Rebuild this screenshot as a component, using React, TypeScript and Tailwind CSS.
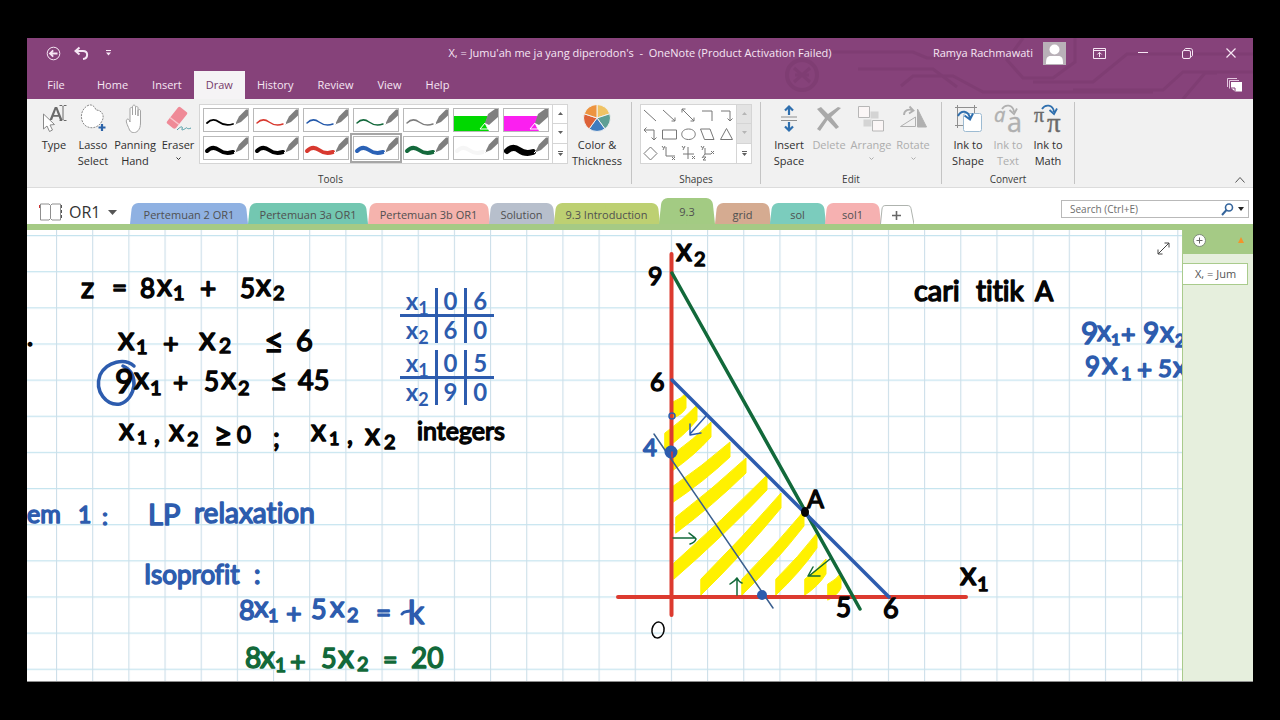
import type { ReactNode } from "react";
import clsx from "clsx";

const INK = "#050505";
const BLUE = "#2d5cae";
const GREEN = "#12693a";
const RED = "#dc3a2f";

/* ---------- title bar ---------- */

const Circuit = () => (
  <svg className="pointer-events-none absolute top-0 right-0" width="470" height="61" fill="none" stroke="#763769" strokeWidth="3" opacity="0.4">
    <circle cx="19" cy="37" r="15" strokeWidth="4" />
    <path d="M11 30l16 14M27 30l-16 14M12 37h14" />
    <path d="M20 14h110l14 6h60M75 31h75l24 18M118 48l12-10h40l30 16h170" />
    <path d="M240 0l-16 22 16 18h30l22-16V0M250 44h60l34-28h126M290 52h90l20-18h70M400 61l22-26h12" />
  </svg>
);

const TitleBar = () => (
  <div className="relative z-10 grid h-[30px] grid-cols-[1fr_auto_1fr] items-center text-[11px] text-[#f6e6f4]">
    <div className="flex items-center pl-[19px]">
      <button aria-label="Back" className="flex w-[28px] items-center">
        <svg width="15" height="15" viewBox="0 0 15 15" fill="none" stroke="currentColor">
          <circle cx="7.5" cy="7.5" r="6.3" />
          <path d="M11.5 7.5H4.5M7.2 4.3L4 7.5l3.2 3.2" strokeWidth="1.8" />
        </svg>
      </button>
      <button aria-label="Undo" className="flex w-[32px] items-center">
        <svg width="15" height="15" viewBox="0 0 15 15" fill="none" stroke="currentColor" strokeWidth="2">
          <path d="M5.5 1.5L1.5 5l4 3.6M2 5h7c5.5 0 5.5 7.5 0 8" />
        </svg>
      </button>
      <button aria-label="Customize toolbar" className="flex items-center">
        <svg width="5" height="6" viewBox="0 0 5 6" fill="currentColor">
          <path d="M0 0h5v1H0zM0 2.500h5L2.500 5.500z" />
        </svg>
      </button>
    </div>
    <h1 className="whitespace-pre">{"X, = Jumu'ah me ja yang diperodon's  -  OneNote (Product Activation Failed)"}</h1>
    <div className="flex items-center justify-end">
      <span>Ramya Rachmawati</span>
      <svg className="mr-[11px] ml-[10px]" width="23" height="23" viewBox="0 0 23 23">
        <path d="M0 0h23v23H0z" fill="#b9b1b8" />
        <circle cx="11.500" cy="7.500" r="5" fill="#fff" />
        <path d="M3 22c0-6 1-8 5-8h7c4 0 5 2 5 8z" fill="#fff" />
      </svg>
      <button aria-label="Ribbon display options" className="flex w-11 justify-center">
        <svg width="13" height="11" viewBox="0 0 13 11" fill="none" stroke="currentColor">
          <path d="M.5.5h12v10H.5zM.5 2.500h12M6.500 9V4.500M4.300 6.500l2.200-2.200 2.200 2.200" />
        </svg>
      </button>
      <button aria-label="Minimize" className="flex w-11 justify-center">
        <svg width="10" height="2"><path d="M0 .5h10" stroke="currentColor" /></svg>
      </button>
      <button aria-label="Restore" className="flex w-11 justify-center">
        <svg width="11" height="11" viewBox="0 0 11 11" fill="none" stroke="currentColor">
          <rect x=".5" y="2.500" width="8" height="8" rx="1.500" />
          <path d="M2.500 2.500V2C2.500 1 3 .5 4 .5h4.500c1 0 2 1 2 2V7c0 1-.5 1.500-1.500 1.500" />
        </svg>
      </button>
      <button aria-label="Close" className="flex w-11 justify-center">
        <svg width="10" height="10"><path d="M.5.5l9 9M9.500.5l-9 9" stroke="currentColor" strokeWidth="1.200" /></svg>
      </button>
    </div>
  </div>
);

const menus = ["Home", "Insert", "Draw", "History", "Review", "View", "Help"];

const MenuTabs = () => (
  <nav className="relative z-10 mt-[3px] flex h-7 items-stretch text-[11px] text-[#f6e6f4]">
    <button className="w-[58px]">File</button>
    {menus.map((m) => (
      <button key={m} className={clsx("px-3", m === "Draw" && "bg-[#f5f3f5] text-[#77396b]")}>
        {m}
      </button>
    ))}
    <button aria-label="Pages" className="mr-[11px] ml-auto">
      <svg width="15" height="14" viewBox="0 0 15 14">
        <path d="M.5 9V.5H10M2.500 10.500v-8H12" fill="none" stroke="#e3c6df" />
        <path d="M4 4h11v9.500H8L4 10z" fill="#fff" />
        <path d="M4 10h4v3.500" fill="none" stroke="#86417a" />
      </svg>
    </button>
  </nav>
);

/* ---------- ribbon ---------- */

const Chevron = () => (
  <svg width="5" height="4" viewBox="0 0 5 4" fill="none" stroke="currentColor"><path d="M.5.5l2 2 2-2" /></svg>
);

type RibbonButtonProps = { label: string; icon: ReactNode; width: string; drop?: boolean; disabled?: boolean };

const RibbonButton = ({ label, icon, width, drop, disabled }: RibbonButtonProps) => (
  <button disabled={disabled} className={clsx("flex flex-col items-center text-center leading-4", width, disabled ? "text-[#adadad]" : "text-[#2f2f2f]")}>
    <span className="mb-1 flex h-[29px] items-center">{icon}</span>
    <span>{label}</span>
    {drop && <span className="mt-1"><Chevron /></span>}
  </button>
);

const Group = ({ title, className, children }: { title: string; className?: string; children: ReactNode }) => (
  <section className={clsx("my-[3px] flex flex-col border-r border-[#c4c4c4] pt-[2px]", className)}>
    <div className="flex flex-1 items-start">{children}</div>
    <h2 className="text-center text-[10px] leading-[10px] text-[#3b3b3b]">{title}</h2>
  </section>
);

const TypeIcon = () => (
  <svg width="28" height="29" viewBox="0 0 28 29">
    <path d="M9.500 16L14.800 3h2.400l5.300 13h-2.600l-1.200-3.200h-5.400L12.100 16zM14 11h4L16 5.500z" fill="#6a6a6a" />
    <path d="M19.500 1.500h2.500l1 1 1-1h2.500M23 2.500v13M19.500 16.500h2.500l1-1 1 1h2.500" fill="none" stroke="#6a6a6a" />
    <path d="M3.500 10v15l3.500-3 2.500 5.500 3-1.500-2.500-5 4.500-.5z" fill="#fff" stroke="#8a8a8a" />
  </svg>
);

const LassoIcon = () => (
  <svg width="28" height="29" viewBox="0 0 28 29">
    <path d="M8 2C13-1 16 3 17 6c6 0 9 6 6 11-3 6-9 8-14 6C2 21-1 8 8 2z" fill="#fff" stroke="#8b8b8b" strokeDasharray="2 1" />
    <path d="M23 20v7M19.500 23.500h7" stroke="#2c63a8" strokeWidth="2.200" />
  </svg>
);

const HandIcon = () => (
  <svg width="20" height="29" viewBox="0 0 20 29" fill="#fff" stroke="#a3a3a3">
    <path d="M5 13V5c0-2 2.500-2 2.500 0v6V3c0-2.500 3-2.500 3 0v8-7c0-2 2.500-2 2.500 0v8-5c0-2 2.500-2 2.500 0v12c0 10-8 12-11 7-1-3-4-8-3-10s3-.5 3.500 2z" />
  </svg>
);

const EraserIcon = () => (
  <svg width="28" height="29" viewBox="0 0 28 29">
    <path d="M14 3.500c1-1 1.500-1 2.500-.3l6 4.800c1 .8 1 1.500.3 2.500L12 24c-1 1-2 1-3 .3l-5.500-4.500c-1-.8-1-1.600-.3-2.500z" fill="#ef8a97" />
    <path d="M6 13.500l9 7" stroke="#f9c6cc" strokeWidth="1.500" />
    <path d="M13 26c5-5 6-3 5-1s3 0 4-1 1 2 5 0" fill="none" stroke="#4d9ca6" />
  </svg>
);

const WheelIcon = () => (
  <svg width="28" height="29" viewBox="-14 -14 28 29" stroke="#f1f1f1" strokeWidth="1">
    <path d="M0 0L0-13.500A13.500 13.500 0 0 1 12.800-4.200z" fill="#efc365" />
    <path d="M0 0L12.800-4.200A13.500 13.500 0 0 1 7.900 10.900z" fill="#5e9f95" />
    <path d="M0 0L7.900 10.900A13.500 13.500 0 0 1-7.900 10.900z" fill="#3f7cbf" />
    <path d="M0 0L-7.900 10.900A13.500 13.500 0 0 1-12.800-4.200z" fill="#dd6238" />
    <path d="M0 0L-12.800-4.200A13.500 13.500 0 0 1 0-13.500z" fill="#ed9440" />
  </svg>
);

const pens = [
  { name: "Black pen, thin", color: "#000", w: 1.8 },
  { name: "Red pen, thin", color: "#d8392f", w: 1.5 },
  { name: "Blue pen, thin", color: "#2459ab", w: 1.5 },
  { name: "Green pen, thin", color: "#14693c", w: 1.5 },
  { name: "Gray pen, thin", color: "#7d7d7d", w: 1.5 },
  { name: "Green highlighter", color: "#00d800", w: 0 },
  { name: "Magenta highlighter", color: "#fb1ff0", w: 0 },
  { name: "Black pen, medium", color: "#000", w: 4 },
  { name: "Black pen, wide", color: "#000", w: 4 },
  { name: "Red pen, wide", color: "#d8392f", w: 4 },
  { name: "Blue pen, wide", color: "#2b62b6", w: 4, selected: true },
  { name: "Green pen, wide", color: "#14693c", w: 4 },
  { name: "White pen", color: "#f6f6f6", w: 4 },
  { name: "Black pen, thick", color: "#000", w: 6 },
];

const PenCell = ({ name, color, w, selected }: { name: string; color: string; w: number; selected?: boolean }) => (
  <button
    aria-label={name}
    className={clsx("h-6 w-[46px] border border-[#b9b9b9] bg-white", selected && "outline-2 outline-offset-1 outline-[#a6a6a6]")}
  >
    <svg width="44" height="22" viewBox="0 0 44 22">
      {w === 0 ? (
        <>
          <path d="M0 7h34l-3 8 4 7H0z" fill={color} />
          <path d="M31 14l-5 6h8z" fill={color} stroke="#fff" strokeWidth="1" />
        </>
      ) : (
        <path d="M3 14c4-4 8-4 12-1s8 4 14 2" fill="none" stroke={color} strokeWidth={w} strokeLinecap="round" />
      )}
      <path d={w === 0 ? "M31 14l3-9 7-5h3v8l-9 8z" : "M31 15.500l4-8 7-7h2v6l-7 6.500z"} fill="#7f7f7f" />
      {w > 0 && <path d="M30 16l2-2" stroke="#fff" strokeWidth="1" />}
    </svg>
  </button>
);

const ScrollColumn = ({ dim }: { dim?: boolean }) => (
  <div className="grid w-[15px] grid-rows-3 border-l border-[#d5d5d5]">
    {["M0 3l2.500-3 2.500 3z", "M0 0l2.500 3 2.500-3z", "M0 0h5v1H0zM0 2l2.500 3 2.500-3z"].map((d, i) => (
      <button
        key={d}
        aria-label={["Scroll up", "Scroll down", "More"][i]}
        className={clsx("flex items-center justify-center border-b border-[#d5d5d5] last:border-b-0", dim && i < 2 ? "bg-[#e3e3e3] text-[#b5b5b5]" : "text-[#606060]")}
      >
        <svg width="5" height="5" fill="currentColor"><path d={d} /></svg>
      </button>
    ))}
  </div>
);

const shapes: [string, string][] = [
  ["Line", "M2 3l12 11"],
  ["Arrow", "M2 3l12 11M14 10.500v3.500h-3.500"],
  ["Double arrow", "M2 2l12 12M2 5.500V2h3.500M14 10.500v3.500h-3.500"],
  ["Elbow", "M3 4h10v10"],
  ["Elbow arrow", "M3 4h9v10M9.500 11.500l2.500 2.500 2.500-2.500"],
  ["Elbow double arrow", "M2 4h10v10M9.500 11.500l2.500 2.500 2.500-2.500M4.500 1.500L2 4l2.500 2.500"],
  ["Rectangle", "M1.500 4h14v9h-14z"],
  ["Ellipse", "M8.500 3c9 0 9 10.500 0 10.500S-.5 3 8.500 3z"],
  ["Parallelogram", "M1.500 3h9.500l4 10.500H5.500z"],
  ["Triangle", "M8.500 2.500l6 11h-12z"],
  ["Diamond", "M8.500 2l6.500 6.500-6.500 6.500L2 8.500z"],
  ["2D axes, corner", "M5 2v9h9M1 1l1.500 2M4 1L2 5M11 12l3 3M14 12l-3 3"],
  ["2D axes", "M8 2v12M3 9h11M2 1l1.500 2M5 1L3 5M12 11l3 3M15 11l-3 3"],
  ["3D axes", "M6 3v6h6M6 9l-3 4M2 1l1.500 2M5 1L3 5M12 6l3 3M15 6l-3 3M4 12h3l-3 3h3"],
];

const InsertSpaceIcon = () => (
  <svg width="18" height="29" viewBox="0 0 18 29">
    <path d="M1 13h16M1 16.500h16" stroke="#8f8f8f" />
    <path d="M9 11V3M9 18v8M5 6.500l4-4 4 4M5 22.500l4 4 4-4" fill="none" stroke="#2f6fae" strokeWidth="2.200" />
  </svg>
);

const DeleteIcon = () => (
  <svg width="26" height="29" viewBox="0 0 26 29" fill="#a9a9a9">
    <path d="M1 5l4-2 7 7 10-7 3 1-10 9 8 10-3 2-8.500-9L4 27l-3-2 8-11z" />
  </svg>
);

const ArrangeIcon = () => (
  <svg width="28" height="29" viewBox="0 0 28 29" stroke="#b7b7b7">
    <path d="M13.500 7.500h8v7h-8zM6.500 15.500h8v7h-8z" fill="#d4d4d4" stroke="none" />
    <path d="M1.500 2.500h11v11h-11zM15.500 16.500h11v10.500h-11z" fill="#fbf6f6" />
  </svg>
);

const RotateIcon = () => (
  <svg width="28" height="29" viewBox="0 0 28 29" fill="none" stroke="#b0b0b0">
    <path d="M16.500 13v9.500H1.500z" />
    <path d="M18.500 5l9 18h-9z" fill="#b0b0b0" />
    <path d="M5 11c0-5 5-6.500 9-4.500M10.500 2.500L14.500 6.500l-4.500 3" strokeWidth="1.800" />
  </svg>
);

const InkToShapeIcon = () => (
  <svg width="28" height="29" viewBox="0 0 28 29" fill="none">
    <path d="M3.500 1v23M1 3.500h22M20.500 1v8M1 21.500h8" stroke="#8f8f8f" />
    <rect x="9.500" y="9.500" width="18" height="18" rx="2" fill="#fff" stroke="#9dbbd2" />
    <path d="M4 12c3-6 10-6 12 2M10.500 11.500l5.500 4 3-6" stroke="#2f6fae" strokeWidth="2" />
  </svg>
);

const ConvertIcon = ({ glyph, font, color, arrow, italic }: { glyph: string; font: string; color: string; arrow: string; italic?: boolean }) => (
  <svg className="overflow-visible" width="28" height="29" viewBox="0 0 28 29" fill="none" aria-hidden="true">
    <g fill={color} stroke={color} strokeWidth="0.400" fontFamily={font}>
      <text x="0" y="18" fontSize="20" fontStyle={italic ? "italic" : "normal"}>{glyph}</text>
      <text x="13" y="28" fontSize="27">{glyph}</text>
    </g>
    <path d="M8 5c3-5 11-5 12 3M15.500 6l4.500 4 3-5.500" stroke={arrow} strokeWidth="1.800" />
  </svg>
);

const Ribbon = () => (
  <div className="flex h-[89px] border-b border-[#dcdcdc] bg-[#f1f1f1] text-[11px]">
    <Group title="Tools" className="pr-[5px] pl-2">
      <RibbonButton label="Type" icon={<TypeIcon />} width="w-[38px]" />
      <RibbonButton label="Lasso Select" icon={<LassoIcon />} width="w-10" />
      <RibbonButton label="Panning Hand" icon={<HandIcon />} width="w-[44px]" />
      <RibbonButton label="Eraser" icon={<EraserIcon />} width="w-[42px]" drop />
      <div className="flex h-[60px] border border-[#d5d5d5] bg-white">
        <div className="grid grid-cols-7 content-center gap-x-[4px] gap-y-1 px-[3px]">
          {pens.map((p) => (
            <PenCell key={p.name} {...p} />
          ))}
        </div>
        <ScrollColumn />
      </div>
      <RibbonButton label="Color & Thickness" icon={<WheelIcon />} width="w-[58px]" />
    </Group>
    <Group title="Shapes" className="px-2">
      <div className="flex h-[60px] border border-[#d5d5d5] bg-white">
        <div className="grid grid-cols-5 content-center gap-[2px] px-[1px]">
          {shapes.map(([name, d]) => (
            <button key={name} aria-label={name}>
              <svg width="17" height="17" fill="none" stroke="#777"><path d={d} /></svg>
            </button>
          ))}
        </div>
        <ScrollColumn dim />
      </div>
    </Group>
    <Group title="Edit" className="px-2">
      <RibbonButton label="Insert Space" icon={<InsertSpaceIcon />} width="w-10" />
      <RibbonButton label="Delete" icon={<DeleteIcon />} width="w-10" disabled />
      <RibbonButton label="Arrange" icon={<ArrangeIcon />} width="w-[44px]" drop disabled />
      <RibbonButton label="Rotate" icon={<RotateIcon />} width="w-10" drop disabled />
    </Group>
    <Group title="Convert" className="px-[6px]">
      <RibbonButton label="Ink to Shape" icon={<InkToShapeIcon />} width="w-10" />
      <RibbonButton label="Ink to Text" icon={<ConvertIcon glyph="a" font="Open Sans, sans-serif" color="#b0b0b0" arrow="#b0b0b0" italic />} width="w-10" disabled />
      <RibbonButton label="Ink to Math" icon={<ConvertIcon glyph="π" font="Liberation Serif, serif" color="#6a6a6a" arrow="#2f6fae" />} width="w-10" />
    </Group>
    <button aria-label="Collapse ribbon" className="mr-2 mb-1 ml-auto self-end">
      <svg width="10" height="6" fill="none" stroke="#555"><path d="M.5 5.500l4.500-5 4.500 5" /></svg>
    </button>
  </div>
);

/* ---------- section tabs ---------- */

const sections = [
  { name: "Pertemuan 2 OR1", color: "bg-[#8fb1e2]", width: "w-[118px]" },
  { name: "Pertemuan 3a OR1", color: "bg-[#73c7b1]", width: "w-[120px]" },
  { name: "Pertemuan 3b OR1", color: "bg-[#f5b3ad]", width: "w-[121px]" },
  { name: "Solution", color: "bg-[#b7bfcc]", width: "w-[65px]" },
  { name: "9.3 Introduction", color: "bg-[#bdd072]", width: "w-[105px]" },
  { name: "9.3", color: "bg-[#a3cb83]", width: "w-[56px]", active: true },
  { name: "grid", color: "bg-[#d5ab91]", width: "w-[55px]" },
  { name: "sol", color: "bg-[#7bccbd]", width: "w-[55px]" },
  { name: "sol1", color: "bg-[#f6b1b1]", width: "w-[55px]" },
];

const SectionTabs = () => (
  <div className="flex h-9 items-end bg-white">
    <button className="flex w-[103px] items-center self-center pt-3 pl-3 text-base text-[#333]">
      <svg width="24" height="20" viewBox="0 0 24 20" fill="none" stroke="#8f8f8f">
        <path d="M11.500 3.500L10 2H1.500v16H10l1.500-1.500L13 18h8.500V2H13zM11.500 3.500v13" />
        <path d="M22.500 3v3M22.500 8v3M22.500 13v3" stroke="#555" />
        <path d="M.5 3v3" stroke="#c33" />
      </svg>
      <span className="ml-[6px]">OR1</span>
      <svg className="ml-2" width="9" height="5"><path d="M0 0h9L4.500 5z" fill="#555" /></svg>
    </button>
    {sections.map((s) => (
      <button key={s.name} className={clsx("relative pt-[3px] text-[11px] text-[#505050]", s.width, s.active ? "h-[26px]" : "h-[21px]")}>
        <span className={clsx("absolute inset-y-0 left-0 w-1/2 origin-bottom-left -skew-x-6 rounded-tl-md", s.color)} />
        <span className={clsx("absolute inset-y-0 right-0 w-1/2 origin-bottom-right skew-x-6 rounded-tr-md", s.color)} />
        <span className="relative">{s.name}</span>
      </button>
    ))}
    <button aria-label="New section" className="relative flex h-[19px] w-[34px] items-center justify-center">
      <svg width="34" height="19" fill="none">
        <path d="M.5 19L2 4C2.500 1.500 3 .5 6 .5h21c3 0 3.500 1 4 3L34 19" stroke="#aeb3ae" />
        <path d="M16.500 6v9M12 10.500h9" stroke="#666" strokeWidth="1.600" />
      </svg>
    </button>
    <div className="mr-1 mb-[6px] ml-auto flex h-[18px] w-[188px] items-center border border-[#b9b9b9] bg-white pr-1 pl-2">
      <input type="text" aria-label="Search" placeholder="Search (Ctrl+E)" className="min-w-0 flex-1 text-[10px] text-[#333] outline-none placeholder:text-[#6d6d6d]" />
      <button aria-label="Search notebook" className="flex items-center gap-1">
        <svg width="13" height="13" fill="none" stroke="#35659c" strokeWidth="1.600">
          <circle cx="8" cy="4.500" r="3.500" />
          <path d="M5.500 7L1 12" strokeWidth="2" />
        </svg>
        <svg width="6" height="4"><path d="M0 0h6L3 4z" fill="#222" /></svg>
      </button>
    </div>
  </div>
);

/* ---------- page ink ---------- */

// a part is [text, x, baseline, size]
type Part = [string, number, number, number];
type Note = { color: string; parts: Part[] };

const notes: Note[] = [
  { color: INK, parts: [["z", 81, 298, 29], ["=", 112, 297, 26], ["8", 140, 298, 26], ["x", 157, 296, 30], ["1", 173, 300, 20], ["+", 200, 299, 28], ["5", 240, 298, 26], ["x", 256, 296, 30], ["2", 273, 300, 20]] },
  { color: INK, parts: [[".", 27, 346, 26]] },
  { color: INK, parts: [["x", 118, 350, 33], ["1", 136, 354, 20], ["+", 163, 353, 27], ["x", 199, 350, 33], ["2", 219, 353, 21], ["≤", 264, 353, 34], ["6", 296, 351, 29]] },
  { color: INK, parts: [["9", 115, 393, 32], ["x", 134, 389, 30], ["1", 150, 395, 20], ["+", 173, 392, 26], ["5", 204, 391, 26], ["x", 221, 389, 30], ["2", 238, 395, 20], ["≤", 270, 391, 30], ["45", 298, 390, 27]] },
  { color: INK, parts: [["x", 119, 440, 30], ["1", 137, 444, 17], [",", 154, 443, 26], ["x", 169, 441, 30], ["2", 187, 446, 20], ["≥", 214, 446, 32], ["0", 237, 443, 24], [";", 273, 447, 26], ["x", 311, 441, 30], ["1", 329, 445, 18], [",", 347, 444, 26], ["x", 365, 445, 30], ["2", 384, 449, 20], ["integers", 417, 440, 25]] },
  { color: BLUE, parts: [["em", 27, 523, 25], ["1", 78, 523, 23], [":", 102, 525, 24], ["LP", 148, 525, 29], ["relaxation", 194, 523, 28]] },
  { color: BLUE, parts: [["Isoprofit", 144, 584, 26], [":", 254, 584, 26]] },
  { color: BLUE, parts: [["8", 239, 620, 27], ["x", 254, 617, 29], ["1", 268, 622, 18], ["+", 286, 623, 27], ["5", 311, 619, 27], ["x", 330, 617, 29], ["2", 347, 622, 20], ["=", 376, 622, 26], ["k", 408, 624, 32]] },
  { color: GREEN, parts: [["8", 245, 668, 28], ["x", 260, 668, 30], ["1", 275, 672, 19], ["+", 290, 671, 27], ["5", 321, 668, 27], ["x", 338, 668, 32], ["2", 357, 671, 20], ["=", 383, 669, 25], ["20", 411, 668, 28]] },
  { color: INK, parts: [["x", 676, 261, 32], ["2", 694, 266, 20]] },
  { color: INK, parts: [["9", 648, 285, 25]] },
  { color: INK, parts: [["6", 650, 391, 25]] },
  { color: BLUE, parts: [["4", 643, 456, 24]] },
  { color: INK, parts: [["A", 807, 508, 25]] },
  { color: INK, parts: [["5", 836, 617, 26]] },
  { color: INK, parts: [["6", 883, 618, 27]] },
  { color: INK, parts: [["x", 960, 585, 33], ["1", 977, 591, 20]] },
  { color: INK, parts: [["cari", 914, 301, 29], ["titik", 976, 301, 28], ["A", 1035, 301, 27]] },
  { color: BLUE, parts: [["9", 1081, 344, 30], ["x", 1097, 341, 28], ["1", 1111, 345, 16], ["+", 1121, 343, 25], ["9", 1143, 343, 28], ["x", 1160, 342, 28], ["2", 1175, 347, 17]] },
  { color: BLUE, parts: [["9", 1085, 376, 26], ["x", 1102, 374, 31], ["1", 1121, 380, 18], ["+", 1137, 379, 26], ["5", 1158, 377, 24], ["x", 1173, 377, 28]] },
];

// highlighter strokes: [x1, top1, x2, top2]; the flat nib leaves vertical ends
const strokes: [number, number, number, number][] = [
  [673, 402, 686, 393],
  [665, 433, 697, 405],
  [672, 455, 711, 422],
  [672, 487, 730, 442],
  [676, 517, 746, 458],
  [674, 563, 767, 475],
  [701, 579, 781, 493],
  [742, 579, 804, 511],
  [776, 579, 817, 533],
  [805, 579, 826, 559],
  [828, 584, 841, 573],
];

const Graph = () => (
  <g fill="none" strokeLinecap="round" strokeLinejoin="round">
    {strokes.map(([x1, y1, x2, y2]) => (
      <path
        key={y1 * 1000 + x1}
        d={`M${x1} ${y1}Q${(x1 + x2) / 2 + 2} ${(y1 + y2) / 2 + 1} ${x2} ${y2}v15Q${(x1 + x2) / 2 + 3} ${(y1 + y2) / 2 + 17} ${x1} ${y1 + 16}z`}
        fill="#fff100"
        stroke="#fff100"
      />
    ))}
    <path d="M671.500 254v361M618 597h348" stroke={RED} strokeWidth="4" />
    <path d="M672 273l188 336" stroke={GREEN} strokeWidth="3.500" />
    <path d="M672 380l217 217" stroke={BLUE} strokeWidth="3.500" />
    <path d="M654 434l119 174" stroke="#3a5f8f" strokeWidth="1.500" />
    <circle cx="671" cy="452" r="5" fill={BLUE} stroke={BLUE} strokeWidth="3" />
    <path d="M672 452v5" stroke={RED} strokeWidth="1.500" />
    <circle cx="672" cy="416" r="3" stroke={BLUE} strokeWidth="1.500" />
    <circle cx="762" cy="595" r="4" fill={BLUE} stroke={BLUE} strokeWidth="2" />
    <path d="M706 416l-16 18M690 424v11l11-2" stroke={BLUE} strokeWidth="1.500" />
    <path d="M673 538h22M689 533c2 2 5 3 7 6-1 3-3 4-6 5M737 595v-17M730 584c3-2 5-3 7-6 1 2 2 4 5 5M830 559l-21 17M813 567l-5 9h12" stroke={GREEN} strokeWidth="1.500" />
    <ellipse cx="805" cy="512" rx="4" ry="5" fill={INK} />
    <ellipse cx="658" cy="630" rx="6" ry="8" stroke={INK} strokeWidth="1.500" transform="rotate(10 658 630)" />
    <path d="M134 366c-9-8-27-5-34 9-6 17 7 31 20 29 16-5 20-31 3-38" stroke={BLUE} strokeWidth="3.500" />
    <path d="M402 614c2-3 4-2 8-3" stroke={BLUE} strokeWidth="3" />
  </g>
);

const InkLayer = () => (
  <svg className="absolute inset-0 h-full w-full">
    <defs>
      <pattern id="grid" x="56" y="235" width="36.170" height="36.140" patternUnits="userSpaceOnUse">
        <path d="M0 .5h37" stroke="#c5e4ef" strokeWidth="1.200" />
        <path d="M.5 0v37" stroke="#ccdfe9" strokeWidth="1.200" />
      </pattern>
    </defs>
    {/* ink is stored in window coordinates */}
    <g transform="translate(-27 -230)">
      <rect x="27" y="230" width="3000" height="2000" fill="url(#grid)" />
      <Graph />
      <g className="[font-variant-ligatures:none]" fontFamily="Lato, 'Noto Sans', sans-serif" strokeLinejoin="round" strokeWidth="1.500">
        {notes.map((n, i) => (
          <text key={i} fill={n.color} stroke={n.color}>
            {n.parts.map(([t, x, y, size], j) => (
              <tspan key={j} x={x} y={y} fontSize={size}>{t}</tspan>
            ))}
          </text>
        ))}
      </g>
    </g>
  </svg>
);

const PointTable = ({ x1, x2, className }: { x1: string[]; x2: string[]; className: string }) => (
  <table className={clsx("absolute left-[373px] border-collapse text-center font-[Lato] text-[24px] leading-[26px] font-bold text-[#2d5cae]", className)}>
    <tbody>
      {[x1, x2].map((row, i) => (
        <tr key={i} className={clsx(i === 0 && "border-b-[3px] border-[#2d5cae]")}>
          <th scope="row" className="h-[26px] w-9 p-0">x<sub className="text-lg leading-none">{i + 1}</sub></th>
          {row.map((v) => (
            <td key={v} className="w-[29px] border-l-[3px] border-[#2d5cae] p-0">{v}</td>
          ))}
        </tr>
      ))}
    </tbody>
  </table>
);

const Page = () => (
  <main className="relative min-w-0 flex-1 overflow-hidden bg-white">
    <InkLayer />
    <PointTable x1={["0", "6"]} x2={["6", "0"]} className="top-[58px]" />
    <PointTable x1={["0", "5"]} x2={["9", "0"]} className="top-[120px]" />
    <button aria-label="Full page view" className="absolute top-0 right-0 flex h-[36px] w-[38px] items-center justify-center">
      <svg width="13" height="13" fill="none" stroke="#444"><path d="M1 12L12 1M7.500 1H12v4.500M1 7.500V12h4.500" /></svg>
    </button>
  </main>
);

const PagesPanel = () => (
  <aside className="w-[71px] border-l border-[#a9cb8c] bg-[#e6efdd] text-[11px]">
    <div className="flex h-6 items-start justify-between bg-[#a5ca85] pt-1 pr-[9px] pl-[10px]">
      <button aria-label="Add page">
        <svg width="13" height="13"><circle cx="6.500" cy="6.500" r="6" fill="#fff" stroke="#7d8a78" /><path d="M6.500 3.500v6M3.500 6.500h6" stroke="#666" /></svg>
      </button>
      <svg className="mt-[3px]" width="6" height="6"><path d="M3 0l3 6H0z" fill="#f3932b" /></svg>
    </div>
    <button className="mt-[9px] h-[22px] w-[65px] overflow-hidden border border-l-0 border-[#a9cb8c] bg-white pl-3 text-left whitespace-nowrap text-[#555]">
      X, = Jum
    </button>
  </aside>
);

export default function App() {
  return (
    <div className="flex min-h-screen flex-col bg-black px-[27px] py-[38px] font-['Open_Sans','Noto_Sans',sans-serif]">
      <header className="relative overflow-hidden bg-[#86427a]">
        <Circuit />
        <TitleBar />
        <MenuTabs />
      </header>
      <Ribbon />
      <SectionTabs />
      <div className="h-[6px] bg-[#a5ca85]" />
      <div className="flex flex-1 items-stretch border-b border-[#8e8e8e]">
        <Page />
        <PagesPanel />
      </div>
    </div>
  );
}
